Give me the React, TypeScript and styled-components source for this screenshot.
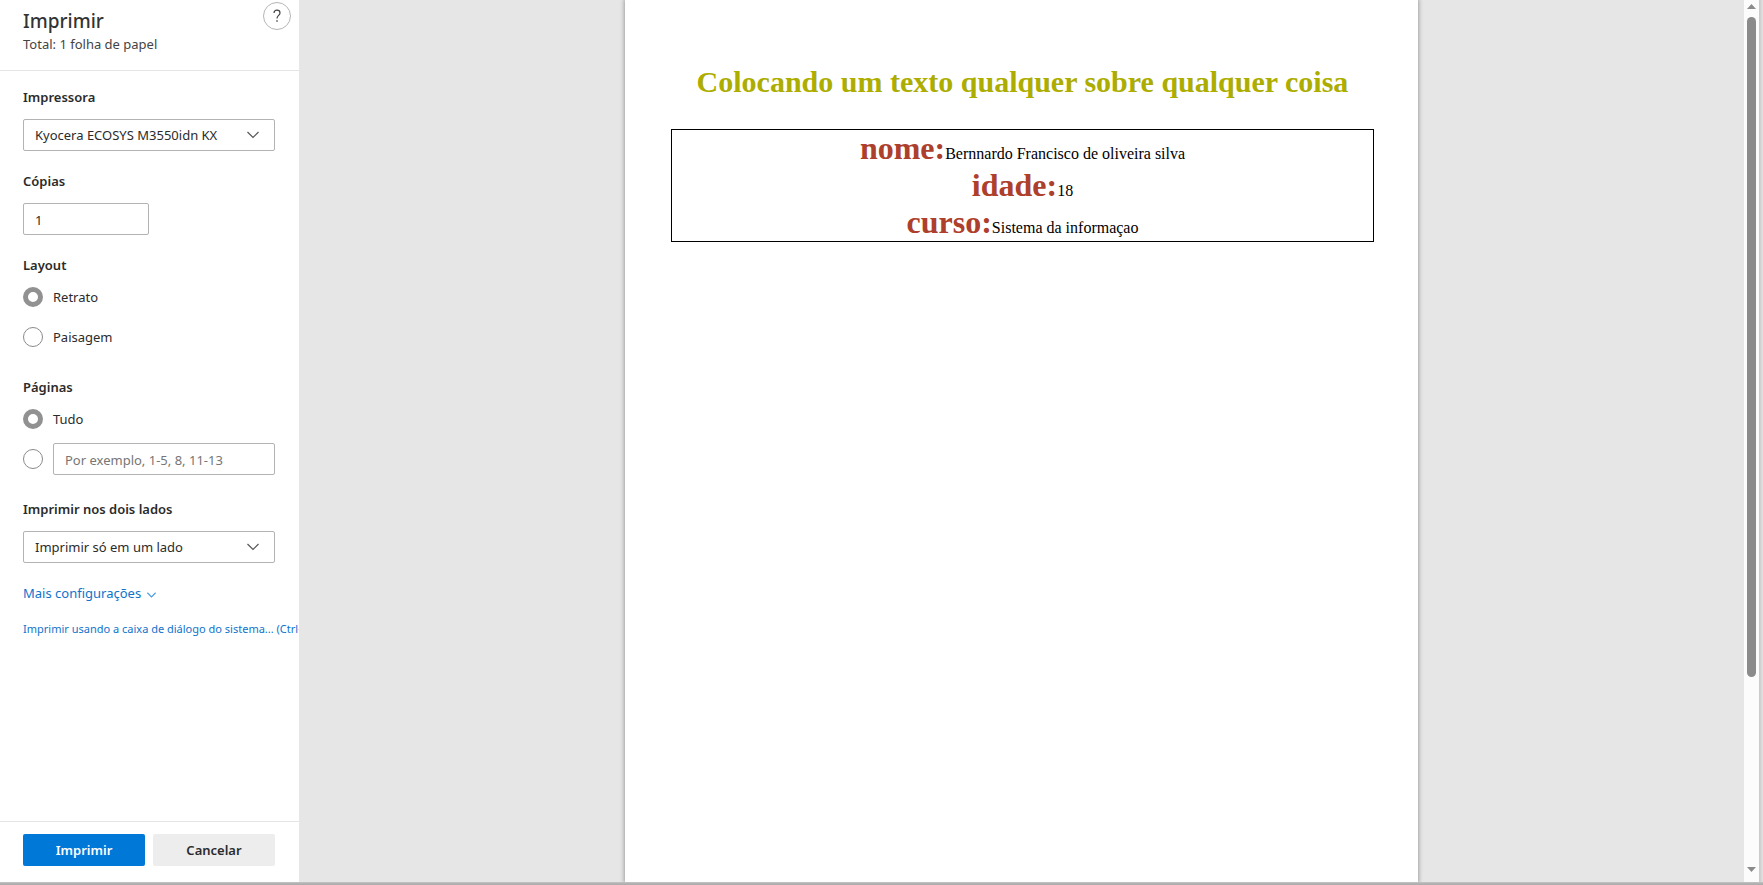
import React, { useState } from "react";
import styled, { createGlobalStyle } from "styled-components";

const GlobalStyle = createGlobalStyle`
  *, *::before, *::after { box-sizing: border-box; }
  body {
    margin: 0;
    overflow: hidden;
    font-family: "Noto Sans", "Open Sans", sans-serif;
    font-size: 13px;
    line-height: 20px;
    color: #2b2b2b;
  }
`;

const Frame = styled.div`
  height: 100vh;
  padding: 0 4px 3px 0;
  background: linear-gradient(to bottom, #c4c4c4, #adadad 2px) bottom / 100% 3px no-repeat,
    linear-gradient(to right, #c8c8c8, #e2e2e2) right / 4px 100% no-repeat;
`;

const Dialog = styled.div`
  display: flex;
  height: 100%;
  overflow: hidden;
`;

const Sidebar = styled.form`
  display: flex;
  flex-direction: column;
  flex: 0 0 299px;
  min-width: 0;
  overflow: hidden;
  background: #fff;
`;

const Header = styled.header`
  display: flex;
  justify-content: space-between;
  align-items: flex-start;
  padding: 2px 8px 16px 23px;
  border-bottom: 1px solid #e5e5e5;
`;

const Title = styled.h1`
  margin: 6px 0 0;
  font-size: 19px;
  line-height: 26px;
  font-weight: 500;
  color: #333;
`;

const Total = styled.p`
  margin: 0;
  color: #444;
`;

const HelpButton = styled.button`
  display: grid;
  place-items: center;
  width: 28px;
  height: 28px;
  padding: 0;
  border: 1px solid #b5b5b5;
  border-radius: 50%;
  background: #fff;
  color: #444;
`;

const Settings = styled.div`
  flex: 1;
  display: flex;
  flex-direction: column;
  align-items: stretch;
  gap: 20px;
  padding: 16px 24px 16px 23px;
`;

const Field = styled.div`
  display: flex;
  flex-direction: column;
  gap: 12px;
`;

const FieldLabel = styled.label`
  font-weight: 600;
`;

const RadioGroup = styled.fieldset`
  margin: 0;
  padding: 0;
  border: 0;
  min-width: 0;
`;

const Legend = styled.legend`
  padding: 0;
  margin-bottom: 2px;
  font-weight: 600;
`;

const RadioRow = styled.div`
  display: flex;
  align-items: center;
  gap: 10px;
  height: 40px;
`;

const Radio = styled.input.attrs({ type: "radio" })`
  appearance: none;
  flex: none;
  width: 20px;
  height: 20px;
  margin: 0;
  border: 1px solid #8a8a8a;
  border-radius: 50%;
  background: #fff;
  &:checked { border: 5px solid #919191; }
`;

const TextInput = styled.input<{ $half?: boolean }>`
  width: ${(p) => (p.$half ? "50%" : "100%")};
  min-width: 0;
  height: 32px;
  padding: 2px 11px 0;
  border: 1px solid #b3b3b3;
  border-radius: 2px;
  background: #fff;
  font: inherit;
  color: inherit;
  &::placeholder { color: #767676; opacity: 1; }
`;

const SelectBox = styled.div`
  display: grid;
  align-items: center;
  > * { grid-area: 1 / 1; }
  > svg { justify-self: end; margin-right: 16px; pointer-events: none; }
`;

const Select = styled.select`
  appearance: none;
  width: 100%;
  height: 32px;
  padding: 0 36px 0 11px;
  border: 1px solid #b3b3b3;
  border-radius: 2px;
  background: #fff;
  font: inherit;
  color: inherit;
`;

const Links = styled.div`
  display: flex;
  flex-direction: column;
  align-items: flex-start;
  gap: 16px;
`;

const MoreButton = styled.button`
  display: flex;
  align-items: center;
  gap: 6px;
  padding: 0;
  border: 0;
  background: none;
  font: inherit;
  color: #0f73cb;
  svg { margin-top: 4px; }
`;

const SystemLink = styled.a`
  font-size: 11px;
  white-space: nowrap;
  color: #0f73cb;
  text-decoration: none;
`;

const Footer = styled.footer`
  display: flex;
  gap: 8px;
  padding: 12px 24px 16px 23px;
  border-top: 1px solid #e5e5e5;
`;

const ActionButton = styled.button<{ $primary?: boolean }>`
  flex: 1;
  height: 32px;
  padding: 0;
  border: 0;
  border-radius: 2px;
  background: ${(p) => (p.$primary ? "#0078d7" : "#ededed")};
  color: ${(p) => (p.$primary ? "#fff" : "#2b2b2b")};
  font: inherit;
  font-weight: 600;
`;

const Preview = styled.main`
  flex: 1;
  display: flex;
  justify-content: center;
  min-width: 0;
  overflow: hidden;
  background: #e6e6e6;
`;

const Sheet = styled.article`
  flex: 0 1 793px;
  padding: 63px 44px 0 46px;
  background: #fff;
  box-shadow: 0 0 4px 1px rgba(0, 0, 0, 0.3);
  font-family: "Liberation Serif", serif;
  text-align: center;
`;

const SheetTitle = styled.h2`
  margin: 0 0 29px;
  font-size: 30px;
  line-height: 37px;
  color: #acad00;
`;

const Details = styled.div`
  border: 1px solid #000;
  color: #000;
`;

const Detail = styled.p`
  margin: 0;
  font-size: 16px;
  line-height: 18px;
`;

const DetailName = styled.strong`
  font-size: 32px;
  line-height: 37px;
  color: #ad402c;
`;

const ScrollTrack = styled.div`
  flex: 0 0 15px;
  display: flex;
  flex-direction: column;
  align-items: center;
  padding: 4px 0 10px;
  background: #fcfcfc;
`;

const ScrollThumb = styled.div`
  flex: 0 0 76%;
  width: 9px;
  margin: 8px 0 auto;
  border-radius: 5px;
  background: #8b8b8b;
`;

const Chevron = ({ size = 12, color = "#555" }: { size?: number; color?: string }) => (
  <svg width={size} height={(size * 2) / 3} viewBox="0 0 12 8" fill="none" stroke={color} strokeWidth={size < 12 ? 1.5 : 1.2} aria-hidden="true">
    <path d="M0.5 1 L6 6.5 L11.5 1" />
  </svg>
);

const details = [
  ["nome:", "Bernnardo Francisco de oliveira silva"],
  ["idade:", "18"],
  ["curso:", "Sistema da informaçao"],
];

export default function App() {
  const [layout, setLayout] = useState("retrato");
  const [pages, setPages] = useState("tudo");

  return (
    <Frame>
      <GlobalStyle />
      <Dialog>
        <Sidebar onSubmit={(e) => e.preventDefault()}>
          <Header>
            <div>
              <Title>Imprimir</Title>
              <Total>Total: 1 folha de papel</Total>
            </div>
            <HelpButton type="button" aria-label="Ajuda">
              <svg width="10" height="14" viewBox="0 0 10 14" fill="none" stroke="currentColor" strokeWidth="1.2" aria-hidden="true">
                <path d="M2 4 C2 2.2 3.2 1.2 4.9 1.2 C6.7 1.2 8 2.2 8 3.9 C8 6.3 5 6.5 5 9.4" />
                <path d="M5 11.2 V12.8" strokeWidth="1.4" />
              </svg>
            </HelpButton>
          </Header>
          <Settings>
            <Field>
              <FieldLabel htmlFor="printer">Impressora</FieldLabel>
              <SelectBox>
                <Select id="printer">
                  <option>Kyocera ECOSYS M3550idn KX</option>
                </Select>
                <Chevron />
              </SelectBox>
            </Field>
            <Field>
              <FieldLabel htmlFor="copies">Cópias</FieldLabel>
              <TextInput id="copies" $half defaultValue="1" inputMode="numeric" />
            </Field>
            <RadioGroup>
              <Legend>Layout</Legend>
              <RadioRow>
                <Radio id="portrait" name="layout" checked={layout === "retrato"} onChange={() => setLayout("retrato")} />
                <label htmlFor="portrait">Retrato</label>
              </RadioRow>
              <RadioRow>
                <Radio id="landscape" name="layout" checked={layout === "paisagem"} onChange={() => setLayout("paisagem")} />
                <label htmlFor="landscape">Paisagem</label>
              </RadioRow>
            </RadioGroup>
            <RadioGroup>
              <Legend>Páginas</Legend>
              <RadioRow>
                <Radio id="all" name="pages" checked={pages === "tudo"} onChange={() => setPages("tudo")} />
                <label htmlFor="all">Tudo</label>
              </RadioRow>
              <RadioRow>
                <Radio name="pages" aria-label="Intervalo de páginas" checked={pages === "intervalo"} onChange={() => setPages("intervalo")} />
                <TextInput aria-label="Páginas" placeholder="Por exemplo, 1-5, 8, 11-13" onFocus={() => setPages("intervalo")} />
              </RadioRow>
            </RadioGroup>
            <Field>
              <FieldLabel htmlFor="duplex">Imprimir nos dois lados</FieldLabel>
              <SelectBox>
                <Select id="duplex">
                  <option>Imprimir só em um lado</option>
                </Select>
                <Chevron />
              </SelectBox>
            </Field>
            <Links>
              <MoreButton type="button">
                Mais configurações
                <Chevron size={9} color="#4a9be0" />
              </MoreButton>
              <SystemLink href="#">Imprimir usando a caixa de diálogo do sistema... (Ctrl+Shift+P)</SystemLink>
            </Links>
          </Settings>
          <Footer>
            <ActionButton type="submit" $primary>Imprimir</ActionButton>
            <ActionButton type="button">Cancelar</ActionButton>
          </Footer>
        </Sidebar>
        <Preview>
          <Sheet>
            <SheetTitle>Colocando um texto qualquer sobre qualquer coisa</SheetTitle>
            <Details>
              {details.map(([name, value]) => (
                <Detail key={name}>
                  <DetailName>{name}</DetailName>
                  {value}
                </Detail>
              ))}
            </Details>
          </Sheet>
        </Preview>
        <ScrollTrack aria-hidden="true">
          <svg width="9" height="5" viewBox="0 0 9 5"><path d="M4.5 0 L9 5 H0 Z" fill="#8b8b8b" /></svg>
          <ScrollThumb />
          <svg width="9" height="5" viewBox="0 0 9 5"><path d="M0 0 H9 L4.5 5 Z" fill="#8b8b8b" /></svg>
        </ScrollTrack>
      </Dialog>
    </Frame>
  );
}
